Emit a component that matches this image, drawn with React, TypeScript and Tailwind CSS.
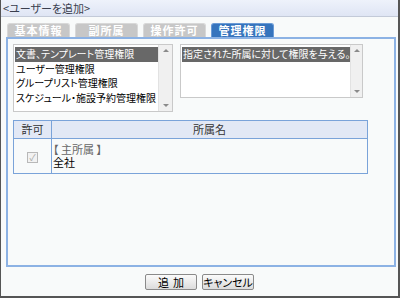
import React from 'react';

const font = "font-['MS_UI_Gothic','Noto_Sans_CJK_JP',sans-serif] [font-feature-settings:'palt']";

const ScrollBar = () => (
  <div className="w-[14px] self-stretch bg-[#f0f0f0] border-l border-[#e2e2e2] flex flex-col justify-between items-center py-[4px]">
    <span className="w-0 h-0 border-l-[3px] border-r-[3px] border-b-[3px] border-l-transparent border-r-transparent border-b-[#8a8a8a]" />
    <span className="w-0 h-0 border-l-[3px] border-r-[3px] border-t-[3px] border-l-transparent border-r-transparent border-t-[#8a8a8a]" />
  </div>
);

const tabs = ['基本情報', '副所属', '操作許可', '管理権限'];

const roles = [
  '文書、テンプレート管理権限',
  'ユーザー管理権限',
  'グループリスト管理権限',
  'スケジュール・施設予約管理権限',
];

export default function App() {
  return (
    <div className={`${font} w-[400px] h-[298px] bg-[#f8fafa] border-l border-r-2 border-b-2 border-[#555] flex flex-col text-[11px] leading-none text-black`}>
      <div className="h-[17px] shrink-0 bg-gradient-to-b from-[#eef2fb] to-[#dfe5f4] border-b border-[#c3cad8] px-[2px] flex items-center text-[11px] text-[#3a3f4f]">
        &lt;ユーザーを追加&gt;
      </div>

      <div className="flex gap-[5px] ml-[6px] mt-[6px] h-[14px]">
        {tabs.map((tab, i) => (
          <div
            key={tab}
            className={`w-[63px] rounded-t-[3px] flex items-center justify-center font-bold text-[11px] text-white tracking-[1px] ${
              i === 3 ? 'bg-[#3674bd] border border-b-0 border-[#6b9bd6]' : 'bg-[#c7c7c7] border border-b-0 border-[#d8d8d8]'
            }`}
          >
            {tab}
          </div>
        ))}
      </div>

      <div className="ml-[5px] mr-[2px] h-[230px] border-2 border-[#8cb2e4] bg-[#f8fafa] pl-[5px] pt-[5px] flex flex-col">
        <div className="flex gap-[7px] items-start text-[10px]">
          <div className="w-[160px] h-[68px] bg-white border border-[#c9c9c9] flex">
            <div className="flex-1 pt-[2px] pl-[1px] flex flex-col">
              {roles.map((r, i) => (
                <div
                  key={r}
                  className={`h-[14.5px] flex items-center pl-[1px] whitespace-nowrap ${i === 0 ? 'bg-[#686868] text-white' : ''}`}
                >
                  {r}
                </div>
              ))}
            </div>
            <ScrollBar />
          </div>

          <div className="w-[183px] h-[54px] bg-white border border-[#c9c9c9] flex">
            <div className="flex-1 pt-[2px] pl-[1px]">
              <div className="h-[14.5px] flex items-center pl-[1px] bg-[#686868] text-white whitespace-nowrap">
                指定された所属に対して権限を与える。
              </div>
            </div>
            <ScrollBar />
          </div>
        </div>

        <div className="mt-[8px] w-[355px] border border-[#7aa3d9] flex flex-col">
          <div className="flex h-[18px] bg-[#e2e8f5] border-b border-[#7aa3d9] text-[#333]">
            <div className="w-[38px] border-r border-[#7aa3d9] flex items-center justify-center">許可</div>
            <div className="flex-1 flex items-center justify-center">所属名</div>
          </div>
          <div className="flex h-[34px]">
            <div className="w-[38px] border-r border-[#7aa3d9] flex items-center justify-center">
              <span className="w-[11px] h-[11px] border border-[#b8b8b8] bg-[#f2f2f2] flex items-center justify-center text-[9px] text-[#a8a8a8] mt-[2px]">
                ✓
              </span>
            </div>
            <p className="flex-1 pt-[4px] pl-[1px] leading-[13px]">
              <span className="text-[#666]">【 主所属 】</span>
              <br />
              全社
            </p>
          </div>
        </div>
      </div>

      <div className="mt-[7px] flex justify-center gap-[5px]">
        <button className="w-[52px] h-[16px] border border-[#8a8a8a] rounded-[2px] bg-gradient-to-b from-[#fbfbfb] to-[#dcdcdc] text-[11px] tracking-[4px] pl-[4px] flex items-center justify-center">
          追加
        </button>
        <button className="w-[52px] h-[16px] border border-[#8a8a8a] rounded-[2px] bg-gradient-to-b from-[#fbfbfb] to-[#dcdcdc] text-[11px] flex items-center justify-center">
          キャンセル
        </button>
      </div>
    </div>
  );
}
